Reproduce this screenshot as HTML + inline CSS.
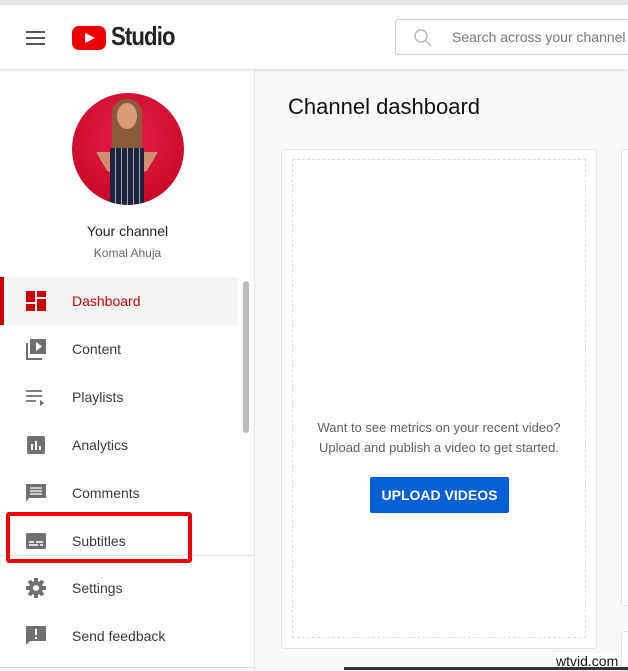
<!DOCTYPE html>
<html><head><meta charset="utf-8"><style>
*{box-sizing:border-box;margin:0;padding:0}
body{width:628px;height:670px;overflow:hidden;background:#f9f9f9;font-family:"Liberation Sans",sans-serif;position:relative}
.top{position:absolute;left:0;top:0;width:628px;height:5px;background:#e8e8e8}
.hdr{position:absolute;left:0;top:5px;width:628px;height:64px;background:#fff;box-shadow:0 1px 3px rgba(0,0,0,.15);z-index:3}
.side{position:absolute;left:0;top:69px;width:255px;height:601px;background:#fff;border-right:1px solid #e5e5e5}
.nav{position:absolute;left:0;width:238px;height:48px;display:flex;align-items:center}
.nav svg{position:absolute;left:25px;width:22px;height:22px}
.nav span{position:absolute;left:72px;font-size:14px;color:#3a3a3a}
</style></head><body>
<div class="top"></div>
<div class="hdr">
 <div style="position:absolute;left:26px;top:26px;width:19px;height:2px;background:#555;box-shadow:0 6px 0 #555,0 12px 0 #555"></div>
 <div style="position:absolute;left:72px;top:21px;width:34px;height:24px;background:#e00;border-radius:7px"></div>
 <div style="position:absolute;left:85px;top:28px;width:0;height:0;border-left:10px solid #fff;border-top:5px solid transparent;border-bottom:5px solid transparent"></div>
 <div style="position:absolute;left:111px;top:16px;font-size:26px;font-weight:bold;color:#222;letter-spacing:-1px;transform:scaleX(.85);transform-origin:left">Studio</div>
 <div style="position:absolute;left:395px;top:14px;width:240px;height:36px;border:1px solid #ccc;border-radius:3px;background:#fff"></div>
 <svg style="position:absolute;left:413px;top:23px" width="20" height="20" viewBox="0 0 20 20"><circle cx="8" cy="8" r="6" fill="none" stroke="#bbb" stroke-width="1.5"/><path d="M12.5 12.5L18 18" stroke="#bbb" stroke-width="1.5"/></svg>
 <div style="position:absolute;left:452px;top:24px;font-size:14px;color:#777">Search across your channel</div>
</div>
<div class="side">
 <div style="position:absolute;left:72px;top:24px;width:112px;height:112px;border-radius:50%;background:radial-gradient(circle at 50% 40%,#e8204a,#c00020);overflow:hidden">
  <div style="position:absolute;left:40px;top:6px;width:30px;height:60px;border-radius:14px 14px 4px 4px;background:#8a5a3a"></div>
  <div style="position:absolute;left:45px;top:10px;width:20px;height:26px;border-radius:50%;background:#d99a78"></div>
  <div style="position:absolute;left:24px;top:50px;width:62px;height:30px;border-radius:40%;background:#d09070;clip-path:polygon(0 30%,100% 30%,80% 100%,20% 100%)"></div>
  <div style="position:absolute;left:38px;top:55px;width:34px;height:60px;background:repeating-linear-gradient(90deg,#1e2440 0 5px,#9aa 5px 6px)"></div>
 </div>
 <div style="position:absolute;left:0;width:255px;top:154px;text-align:center;font-size:14px;color:#222">Your channel</div>
 <div style="position:absolute;left:0;width:255px;top:177px;text-align:center;font-size:12px;color:#666">Komal Ahuja</div>
 <div style="position:absolute;left:243px;top:212px;width:6px;height:152px;background:#bbb;border-radius:3px"></div>
 <div class="nav" style="top:208px;background:#f5f5f5"><div style="position:absolute;left:0;top:0;width:4px;height:48px;background:#c00"></div>
  <svg viewBox="0 0 22 22"><rect x="1" y="1" width="9" height="11" fill="#c00"/><rect x="12" y="1" width="9" height="6" fill="#c00"/><rect x="1" y="14" width="9" height="7" fill="#c00"/><rect x="12" y="9" width="9" height="12" fill="#c00"/></svg>
  <span style="color:#c00">Dashboard</span></div>
 <div class="nav" style="top:256px"><svg viewBox="0 0 22 22"><rect x="5" y="1" width="16" height="15" fill="#707070"/><path d="M11 4v9l6-4.5z" fill="#fff"/><path d="M2 5v16h15" fill="none" stroke="#707070" stroke-width="2"/></svg><span>Content</span></div>
 <div class="nav" style="top:304px"><svg viewBox="0 0 22 22"><path d="M1 5h16M1 10h16M1 15h10" stroke="#707070" stroke-width="1.8"/><path d="M15 14v6l4-3z" fill="#707070"/></svg><span>Playlists</span></div>
 <div class="nav" style="top:352px"><svg viewBox="0 0 22 22"><rect x="2" y="2" width="18" height="18" rx="2" fill="#707070"/><path d="M7 10v6M11 7v9M15 12v4" stroke="#fff" stroke-width="2"/></svg><span>Analytics</span></div>
 <div class="nav" style="top:400px"><svg viewBox="0 0 22 22"><path d="M1 2h20v14H4l-3 4z" fill="#707070"/><path d="M5 6h12M5 9h12M5 12h12" stroke="#fff" stroke-width="1.3"/></svg><span>Comments</span></div>
 <div class="nav" style="top:448px"><svg viewBox="0 0 22 22"><rect x="1" y="3" width="20" height="16" rx="2" fill="#707070"/><path d="M4 12h5M11 12h7M4 15h9M15 15h3" stroke="#fff" stroke-width="1.5"/></svg><span>Subtitles</span></div>
 <div style="position:absolute;left:0;top:486px;width:255px;height:1px;background:#e5e5e5"></div>
 <div class="nav" style="top:495px"><svg viewBox="0 0 22 22"><circle cx="11" cy="11" r="7" fill="#707070"/><path d="M11 1v20M1 11h20M4 4l14 14M18 4L4 18" stroke="#707070" stroke-width="4"/><circle cx="11" cy="11" r="3" fill="#fff"/></svg><span>Settings</span></div>
 <div class="nav" style="top:543px"><svg viewBox="0 0 22 22"><path d="M1 1h20v15H5l-4 4z" fill="#707070"/><path d="M11 4v6M11 12v2" stroke="#fff" stroke-width="2"/></svg><span>Send feedback</span></div>
 <div style="position:absolute;left:0;top:598px;width:255px;height:1px;background:#ddd"></div>
</div>
<div style="position:absolute;left:6px;top:512px;width:186px;height:51px;border:4px solid #e00;border-radius:3px;z-index:5"></div>
<div style="position:absolute;left:288px;top:94px;font-size:22px;color:#111">Channel dashboard</div>
<div style="position:absolute;left:281px;top:149px;width:316px;height:500px;background:#fff;border:1px solid #e3e3e3;border-radius:3px">
 <div style="position:absolute;left:10px;top:9px;width:294px;height:479px;border:1px dashed #ddd"></div>
 <div style="position:absolute;left:0;width:314px;top:268px;text-align:center;font-size:13px;line-height:20px;color:#606060">Want to see metrics on your recent video?<br>Upload and publish a video to get started.</div>
 <div style="position:absolute;left:88px;top:327px;width:139px;height:36px;background:#065fd4;border-radius:2px;color:#fff;font-size:14px;font-weight:bold;text-align:center;line-height:36px">UPLOAD VIDEOS</div>
</div>
<div style="position:absolute;left:621px;top:149px;width:10px;height:457px;background:#fff;border:1px solid #e3e3e3;border-radius:3px"></div>
<div style="position:absolute;left:621px;top:631px;width:10px;height:40px;background:#fff;border:1px solid #e3e3e3;border-radius:3px"></div>
<div style="position:absolute;left:556px;top:653px;font-size:14px;color:#111;background:#fff">wtvid.com</div>
<div style="position:absolute;left:344px;top:667px;width:284px;height:3px;background:#333"></div>
</body></html>
